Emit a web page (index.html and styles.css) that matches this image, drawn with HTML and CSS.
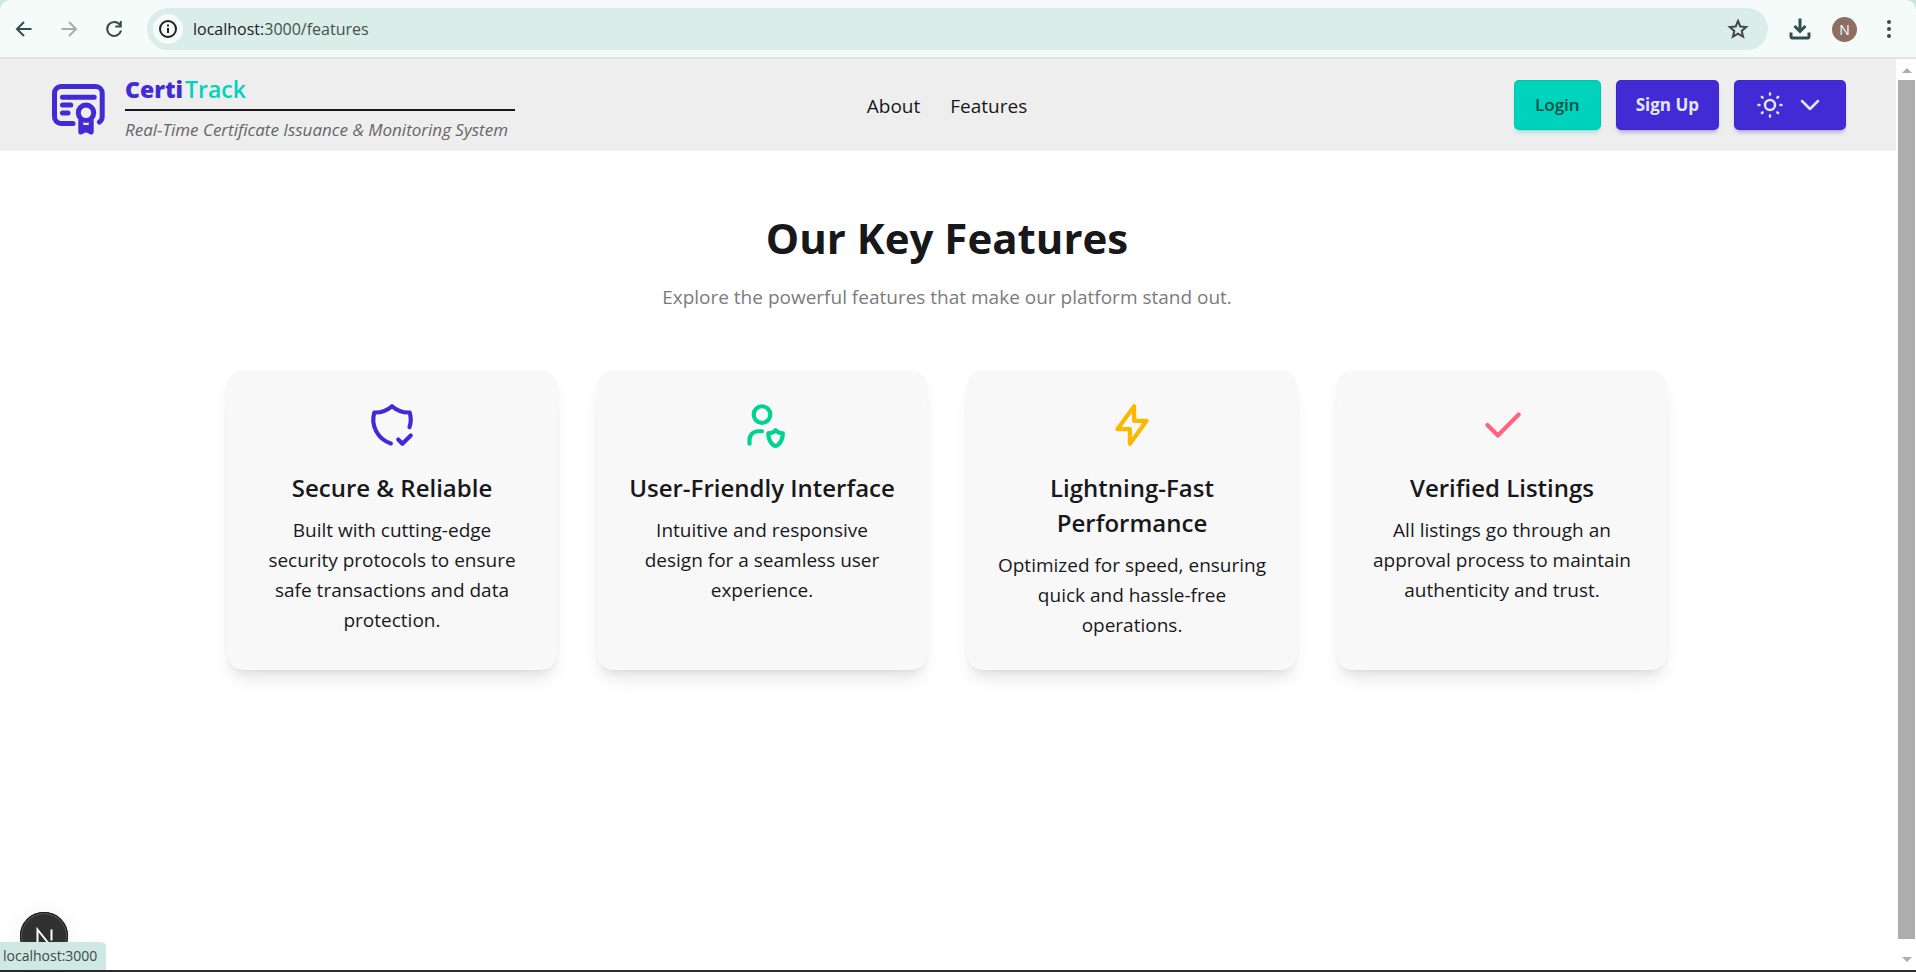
FILE: index.html
```html
<!DOCTYPE html>
<html lang="en">
<head>
<meta charset="utf-8">
<title>CertiTrack - Features</title>
<link rel="stylesheet" href="styles.css">
</head>
<body>
<div class="window">
  <div class="frame">
  <header class="toolbar">
    <button class="tool" aria-label="Back"><svg width="24" height="24" viewBox="0 0 24 24"><path d="M19.500 12H6M12 5L5 12l7 7"/></svg></button>
    <button class="tool tool-off" aria-label="Forward"><svg width="24" height="24" viewBox="0 0 24 24"><path d="M4.500 12H18M12 5l7 7-7 7"/></svg></button>
    <button class="tool" aria-label="Reload"><svg width="24" height="24" viewBox="0 0 24 24"><path d="M18 8A7 7 0 1 0 19 13.500M18.800 4v5.500h-5.500"/></svg></button>
    <div class="address">
      <button class="info" aria-label="Site information"><svg width="20" height="20" viewBox="0 0 20 20"><circle cx="10" cy="10" r="8"/><path d="M10 9v5M10 5.500v2"/></svg></button>
      <span class="url"><span class="host">localhost:</span>3000/features</span>
      <button class="star" aria-label="Bookmark"><svg width="24" height="24" viewBox="0 0 24 24"><path d="M12 4l2.300 5.500 5.900.5-4.500 3.900 1.400 5.800-5.100-3.100-5.100 3.100 1.400-5.800-4.500-3.900 5.900-.5z"/></svg></button>
    </div>
    <button class="tool tool-end" aria-label="Downloads"><svg class="bold" width="24" height="24" viewBox="0 0 24 24"><path d="M12 1.500v13M6.500 9L12 14.500 17.500 9M3 15.500v4a1.500 1.500 0 0 0 1.500 1.500h15a1.500 1.500 0 0 0 1.500-1.500v-4"/></svg></button>
    <button class="avatar" aria-label="Profile">N</button>
    <button class="tool tool-end" aria-label="Menu"><svg class="dots" width="24" height="24" viewBox="0 0 24 24"><circle cx="12" cy="5" r="2"/><circle cx="12" cy="12" r="2"/><circle cx="12" cy="19" r="2"/></svg></button>
  </header>
  </div>

  <div class="viewport">
    <div class="page">
      <nav class="navbar">
        <a class="brand" href="#">
          <svg class="logo" width="60" height="60" viewBox="0 0 60 60"><path d="M25 44.500H13a6.500 6.500 0 0 1-6.500-6.500V14A6.500 6.500 0 0 1 13 7.500h34.700a6.500 6.500 0 0 1 6.500 6.500v24a6.500 6.500 0 0 1-2.700 5M14.500 18.300h31.700M14.500 26h8.300M14.500 34h5.500"/><circle cx="38" cy="33.700" r="7.700"/><path d="M32.800 42v11l5.200-2.500 5.200 2.500V42M35 48.500h6"/></svg>
          <span class="brand-text">
            <span class="brand-name"><span class="brand-first">Certi</span><span class="brand-second">Track</span></span>
            <span class="tagline">Real-Time Certificate Issuance &amp; Monitoring System</span>
          </span>
        </a>
        <div class="links"><a href="#">About</a><a href="#">Features</a></div>
        <div class="actions">
          <button class="btn btn-login">Login</button>
          <button class="btn btn-signup">Sign Up</button>
          <button class="btn btn-theme" aria-label="Theme">
            <svg width="30" height="30" viewBox="0 0 30 30"><circle cx="15" cy="15" r="5"/><path d="M15 3.500v1M15 25.500v1M3.500 15h1M25.500 15h1M6.900 6.900l.7.700M22.400 22.400l.7.700M6.900 23.100l.7-.7M22.400 7.600l.7-.7"/></svg>
            <svg width="30" height="30" viewBox="0 0 30 30"><path d="M7 11l8 8 8-8"/></svg>
          </button>
        </div>
      </nav>

      <main class="content">
        <h1 class="heading">Our Key Features</h1>
        <p class="lead">Explore the powerful features that make our platform stand out.</p>
        <section class="cards">
          <article class="card">
            <svg class="icon icon-primary" viewBox="0 0 24 24"><path d="M11.460 20.846a12 12 0 0 1-7.960-14.846a12 12 0 0 0 8.500-3a12 12 0 0 0 8.500 3a12 12 0 0 1-.09 7.060M15 19l2 2l4-4"/></svg>
            <h2 class="card-title">Secure &amp; Reliable</h2>
            <p class="card-text">Built with cutting-edge security protocols to ensure safe transactions and data protection.</p>
          </article>
          <article class="card">
            <svg class="icon icon-success" viewBox="0 0 24 24"><path d="M6 21v-2a4 4 0 0 1 4-4h2M22 16c0 4-2.500 6-3.500 6s-3.500-2-3.500-6c1 0 2.500-.5 3.500-1.500c1 1 2.500 1.500 3.500 1.500zM8 7a4 4 0 1 0 8 0a4 4 0 0 0-8 0"/></svg>
            <h2 class="card-title">User-Friendly Interface</h2>
            <p class="card-text">Intuitive and responsive design for a seamless user experience.</p>
          </article>
          <article class="card">
            <svg class="icon icon-warning" viewBox="0 0 24 24"><path d="M13 3v7h6l-8 11v-7H5z"/></svg>
            <h2 class="card-title">Lightning-Fast Performance</h2>
            <p class="card-text">Optimized for speed, ensuring quick and hassle-free operations.</p>
          </article>
          <article class="card">
            <svg class="icon icon-error" viewBox="0 0 24 24"><path d="M5 12l5 5l10-10"/></svg>
            <h2 class="card-title">Verified Listings</h2>
            <p class="card-text">All listings go through an approval process to maintain authenticity and trust.</p>
          </article>
        </section>
      </main>
    </div>
    <div class="scrollbar" aria-hidden="true">
      <span class="arrow arrow-up"></span>
      <span class="thumb"></span>
      <span class="arrow arrow-down"></span>
    </div>
    <button class="dev-badge" aria-label="Developer tools"><svg width="48" height="48" viewBox="0 0 48 48"><path d="M17.500 33V17.500L33 37M31.500 17.500v11"/></svg></button>
    <div class="status">localhost:3000</div>
  </div>
</div>
</body>
</html>
```
FILE: styles.css
```css
* { box-sizing: border-box; }

body {
  margin: 0;
  font-family: "Open Sans", "Noto Sans", sans-serif;
  font-size: 19px;
  line-height: 30px;
  color: #18181b;
  background: #ffffff;
}

h1, h2, p { margin: 0; }
a { color: inherit; text-decoration: none; }
button { border: 0; padding: 0; font: inherit; color: inherit; background: none; }
svg { display: block; fill: none; stroke: currentColor; stroke-width: 2; }

.window {
  display: flex;
  flex-direction: column;
  height: 100vh;
  border-bottom: 2px solid #2b2b2e;
}

/* Browser toolbar */
.frame { background: #cbe8df; }
.toolbar {
  display: flex;
  align-items: center;
  height: 59px;
  padding: 1px 15px 0 12px;
  border-bottom: 2px solid #d9e7e3;
  border-radius: 10px 10px 0 0;
  background: #f5fbf9;
  color: #31504a;
}
.tool { display: grid; place-items: center; width: 24px; height: 24px; margin-right: 21px; }
.tool-off { color: #a5aeab; }
.tool-end { margin: 0 0 0 20px; }
.bold { stroke-width: 3; }
.dots { fill: currentColor; stroke: none; }
.address {
  display: flex;
  flex: 1;
  align-items: center;
  height: 42px;
  padding: 0 18px 0 6px;
  border-radius: 21px;
  background: #daede8;
}
.info { display: grid; place-items: center; width: 30px; height: 30px; border-radius: 50%; background: #f5fbf9; color: #1f1f1f; }
.url { flex: 1; padding-left: 10px; font-size: 16px; color: #46504d; }
.host { color: #1b201e; }
.star { color: #444746; }
.avatar {
  width: 25px;
  height: 25px;
  margin-left: 20px;
  border-radius: 50%;
  background: #8d6e63;
  color: #ffffff;
  font-size: 14px;
  line-height: 25px;
}

/* Page area and scrollbar */
.viewport { position: relative; display: flex; flex: 1; min-height: 0; }
.page { flex: 1; min-width: 0; overflow: hidden; }
.scrollbar { display: flex; flex-direction: column; align-items: center; width: 20px; padding: 9px 1px 8px 2px; }
.thumb { flex: 1; width: 17px; margin: 7px 0 18px; background: #adadad; }
.arrow { border: 5px solid transparent; border-top: 0; border-bottom: 5px solid #adadad; }
.arrow-down { border-top: 5px solid #adadad; border-bottom: 0; }

/* Navigation bar */
.navbar {
  display: grid;
  grid-template-columns: 1fr auto 1fr;
  align-items: center;
  height: 92px;
  padding: 0 50px 0 48px;
  background: #eeeeee;
}
.brand { display: flex; align-items: center; gap: 17px; padding-top: 8px; }
.brand-text { min-width: 390px; }
.logo { color: #422ad5; stroke-width: 5; stroke-linecap: round; stroke-linejoin: round; }
.brand-name { display: flex; gap: 2px; padding-bottom: 5px; border-bottom: 2px solid #18181b; font-size: 23px; font-weight: 600; }
.brand-first { color: #422ad5; font-weight: 800; }
.brand-second { color: #00d3bb; }
.tagline { display: block; padding-top: 4px; font-size: 17px; font-style: italic; color: #666668; white-space: nowrap; }
.links { display: flex; gap: 30px; padding-top: 2px; }
.actions { display: flex; justify-content: flex-end; gap: 15px; }
.btn {
  height: 50px;
  padding: 0 21px;
  border-radius: 5px;
  font-size: 17px;
  font-weight: 600;
  background: #422ad5;
  color: #e0e7ff;
  box-shadow: 0 4px 4px -2px rgba(66, 42, 213, 0.4), inset 0 0 0 1px rgba(0, 0, 0, 0.06);
}
.btn-signup { padding: 0 20px; font-weight: 700; }
.btn-login {
  background: #00d3bb;
  color: #084d49;
  box-shadow: 0 4px 4px -2px rgba(0, 211, 187, 0.4), inset 0 0 0 1px rgba(0, 0, 0, 0.06);
}
.btn-theme { display: flex; align-items: center; gap: 10px; }
.btn-theme svg { stroke-width: 2.500; stroke-linecap: round; stroke-linejoin: round; }

/* Features */
.content { padding: 57px 22px 40px 20px; text-align: center; }
.heading { font-size: 42px; line-height: 60px; font-weight: 700; }
.lead { margin-top: 14px; color: #7b7b7d; }
.cards {
  display: grid;
  grid-template-columns: repeat(4, 1fr);
  gap: 40px;
  max-width: 1440px;
  margin: 58px auto 0;
}
.card {
  padding: 30px;
  border-radius: 16px;
  background: #f8f8f8;
  box-shadow: 0 12px 18px -4px rgba(0, 0, 0, 0.1), 0 5px 8px -5px rgba(0, 0, 0, 0.1);
}
.icon { width: 50px; height: 50px; margin: 0 auto 20px; stroke-linecap: round; stroke-linejoin: round; }
.icon-primary { color: #422ad5; }
.icon-success { color: #00d390; }
.icon-warning { color: #fcb700; }
.icon-error { color: #ff637d; }
.card-title { margin-bottom: 10px; font-size: 24px; line-height: 35px; font-weight: 600; }

/* Overlays at the lower left corner */
.dev-badge {
  position: absolute;
  left: 20px;
  bottom: 10px;
  width: 48px;
  height: 48px;
  border-radius: 50%;
  background: #303030;
  color: #ffffff;
  box-shadow: inset 0 0 0 1px #111111, inset 0 0 0 2px #5a5a5a, 0 0 24px rgba(0, 0, 0, 0.06);
}
.status {
  position: absolute;
  left: 0;
  bottom: 0;
  height: 28px;
  padding: 0 9px 0 3px;
  border-radius: 0 5px 0 0;
  background: #cfe8e1;
  color: #3d4a47;
  font-size: 14px;
  line-height: 28px;
}
```
